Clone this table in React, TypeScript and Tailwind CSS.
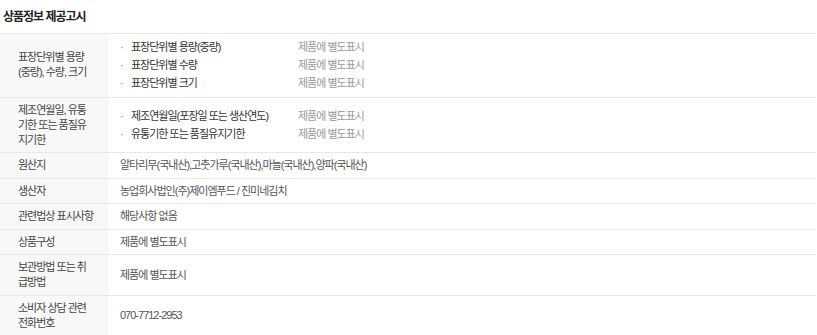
const SEP = "제품에 별도표시";

type Row = {
  label: string[];
  items?: string[];
  value?: string;
};

const rows: Row[] = [
  {
    label: ["표장단위별 용량", "(중량), 수량, 크기"],
    items: ["표장단위별 용량(중량)", "표장단위별 수량", "표장단위별 크기"],
  },
  {
    label: ["제조연월일, 유통", "기한 또는 품질유", "지기한"],
    items: ["제조연월일(포장일 또는 생산연도)", "유통기한 또는 품질유지기한"],
  },
  { label: ["원산지"], value: "알타리무(국내산),고춧가루(국내산),마늘(국내산),양파(국내산)" },
  { label: ["생산자"], value: "농업회사법인(주)제이엠푸드 / 진미네김치" },
  { label: ["관련법상 표시사항"], value: "해당사항 없음" },
  { label: ["상품구성"], value: SEP },
  { label: ["보관방법 또는 취", "급방법"], value: SEP },
  { label: ["소비자 상담 관련", "전화번호"], value: "070-7712-2953" },
];

export default function App() {
  return (
    <div
      className="w-[817px] h-[335px] bg-white text-[#333] overflow-hidden"
      style={{ fontFamily: '"Liberation Sans", "Noto Sans CJK KR", sans-serif' }}
    >
      {/* Title */}
      <div className="h-[33px] flex items-center pl-[3px]">
        <h2 className="text-[12px] font-bold tracking-[-1px] text-[#222]">상품정보 제공고시</h2>
      </div>

      {/* Table */}
      <div className="w-[816px] border-t border-[#e8e8e8] text-[11px] tracking-[-1px]">
        {rows.map((row, i) => (
          <div key={i} className="grid grid-cols-[109px_1fr] border-b border-[#e8e8e8]">
            <div className="bg-[#f8f8f8] pl-[18px] py-[4.75px] flex flex-col justify-center leading-[15px] text-[#444]">
              {row.label.map((l, j) => (
                <span key={j}>{l}</span>
              ))}
            </div>
            <div className="pl-[11px] py-[4.75px] flex flex-col justify-center leading-[15px] text-[#555]">
              {row.items ? (
                row.items.map((it, j) => (
                  <div key={j} className="flex h-[17.8px] items-center">
                    <span className="w-[11px] text-[#888]">·</span>
                    <span className="w-[167px] text-[#333]">{it}</span>
                    <span className="text-[#999]">{SEP}</span>
                  </div>
                ))
              ) : (
                <span>{row.value}</span>
              )}
            </div>
          </div>
        ))}
      </div>
    </div>
  );
}
